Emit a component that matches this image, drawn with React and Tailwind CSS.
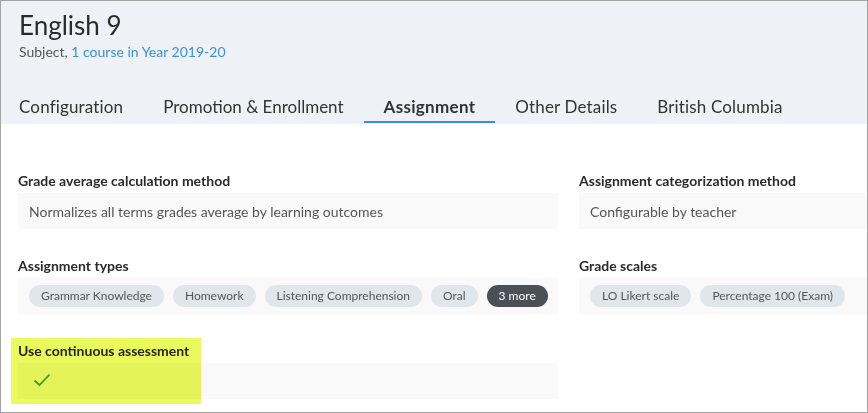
import React from "react";

const tabs = [
  { label: "Configuration", cls: "tracking-[0.15px]" },
  { label: "Promotion & Enrollment", cls: "" },
  { label: "Assignment", cls: "font-bold tracking-[0.3px] border-b-2 border-[#3b8fd9]" },
  { label: "Other Details", cls: "tracking-[0.15px]" },
  { label: "British Columbia", cls: "tracking-[0.15px]" },
];

function Chip({ children, dark }) {
  return (
    <span
      className={
        "h-[22px] px-3 rounded-full text-[12px] leading-[22px] whitespace-nowrap " +
        (dark ? "bg-[#4b5058] text-white" : "bg-[#dfe6ec] text-[#555]")
      }
    >
      {children}
    </span>
  );
}

function Field({ label, children }) {
  return (
    <div className="w-[540px] shrink-0">
      <div className="h-[20px] text-[14px] leading-[16px] font-bold text-[#2a2a2a]">{label}</div>
      <div className="h-[36px] bg-[#f9f9f9] px-[11px] flex items-center gap-[9px] text-[14px] text-[#555]">
        {children}
      </div>
    </div>
  );
}

export default function App() {
  return (
    <div
      className="w-[868px] h-[413px] border border-[#a3a3a3] overflow-hidden bg-white relative"
      style={{ fontFamily: "Lato, 'Noto Sans', sans-serif" }}
    >
      <div className="bg-[#eef2f6] h-[123px] px-[18px] pt-[6px]">
        <h1 className="text-[26px] leading-[36px] text-[#2b2b2b]">English 9</h1>
        <div className="text-[14px] leading-[18px] text-[#555]">
          Subject, <span className="text-[#3d8fd9]">1 course in Year 2019-20</span>
        </div>
        <div className="flex -ml-[20px] mt-[32px]">
          {tabs.map((t) => (
            <div
              key={t.label}
              className={"px-5 h-[30px] text-[17px] leading-[28px] text-[#333] whitespace-nowrap " + t.cls}
            >
              {t.label}
            </div>
          ))}
        </div>
      </div>

      <div className="px-[17px] pt-[49px] flex flex-col gap-[29px]">
        <div className="flex gap-[21px]">
          <Field label="Grade average calculation method">
            Normalizes all terms grades average by learning outcomes
          </Field>
          <Field label="Assignment categorization method">Configurable by teacher</Field>
        </div>
        <div className="flex gap-[21px]">
          <Field label="Assignment types">
            <Chip>Grammar Knowledge</Chip>
            <Chip>Homework</Chip>
            <Chip>Listening Comprehension</Chip>
            <Chip>Oral</Chip>
            <Chip dark>3 more</Chip>
          </Field>
          <Field label="Grade scales">
            <Chip>LO Likert scale</Chip>
            <Chip>Percentage 100 (Exam)</Chip>
          </Field>
        </div>
        <div className="flex gap-[21px]">
          <Field label="Use continuous assessment">
            <svg width="18" height="14" viewBox="0 0 18 14" className="ml-[4px] -mt-[2px]">
              <path d="M1.5 7.5 L6.5 12 L16.5 1.5" fill="none" stroke="#3aa33a" strokeWidth="1.8" />
            </svg>
          </Field>
        </div>
      </div>

      <div className="absolute left-[10px] top-[337px] w-[190px] h-[66px] bg-[#eaf95b] mix-blend-multiply" />
    </div>
  );
}
